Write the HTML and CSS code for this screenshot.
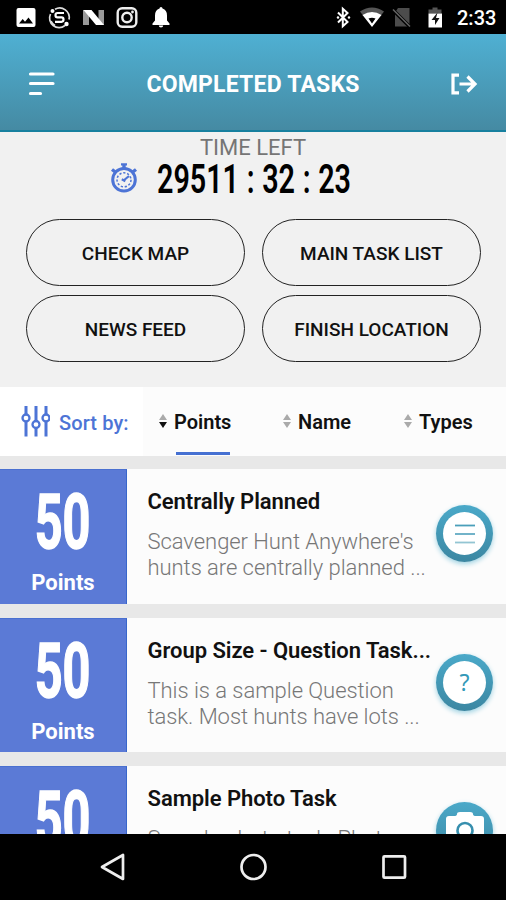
FILE: index.html
```html
<!DOCTYPE html>
<html lang="en">
<head>
<meta charset="utf-8">
<title>Completed Tasks</title>
<link rel="stylesheet" href="styles.css">
</head>
<body>
<div class="phone">
  <div class="status">
    <svg class="status-left" width="180" height="34" viewBox="0 0 180 34">
      <path fill="#fff" fill-rule="evenodd" d="M18.500 8h15q2 0 2 2v15q0 2-2 2h-15q-2 0-2-2v-15q0-2 2-2zM19 23.500h14l-4.500-6-3.500 4.300-2.300-2.800z"/>
      <g fill="none" stroke="#ddd" stroke-width="1.700">
        <path d="M55 9.300A9.500 9.500 0 0 1 69 19.500M65 25.500A9.500 9.500 0 0 1 50.500 14M51 21a9.500 9.500 0 0 0 4 4.500"/>
        <path stroke="#fff" stroke-width="2.200" d="M64 13h-6.500q-2 0-2 2.200t2 2.200h4q2 0 2 2.200t-2 2.200h-6.500"/>
      </g>
      <circle cx="52.500" cy="11" r="2" fill="#fff"/><circle cx="66.500" cy="24" r="2.200" fill="#fff"/>
      <path fill="#999" d="M83 10h6v15h-6zM98.500 10h5.500v15h-5.500z"/><path fill="#fff" d="M83.500 10h8l12.500 15h-8z"/>
      <g fill="none" stroke="#eee" stroke-width="2.400"><rect x="117.700" y="8.200" width="18.600" height="18.600" rx="4.500"/><circle cx="127" cy="17.500" r="4.700"/></g>
      <circle cx="132.500" cy="12" r="1.400" fill="#eee"/>
      <path fill="#fff" d="M159.500 8.500q0-1.500 1.500-1.500t1.500 1.500q4.500 1.300 4.500 7v5l2.500 3v1.500h-17v-1.500l2.500-3v-5q0-5.700 4.500-7zM158.800 25.500h4.400q0 2-2.200 2t-2.200-2z"/>
    </svg>
    <div class="status-right">
      <svg width="116" height="34" viewBox="0 0 116 34">
        <path fill="none" stroke="#fff" stroke-width="2" d="M6 12.500l9.500 9.500-4.700 4.300v-17.500l4.700 4.200-9.500 9.500"/>
        <circle cx="6" cy="17.500" r="1.200" fill="#fff"/><circle cx="17" cy="17.500" r="1.200" fill="#fff"/>
        <path fill="#555" d="M28 11.500q12-8 24 0l-3 4q-9-6-18 0z"/>
        <path fill="#fff" fill-rule="evenodd" d="M30.500 15q9.500-6 19 0l-9.500 12zM36.500 18.500l3.500 5 3.500-5q-3.500-1.500-7 0z"/>
        <path fill="#4c4c4c" d="M66 8h11.500v18.500h-14.500v-14z"/><path d="M60 9l18 18" stroke="#000" stroke-width="3.500"/><path d="M61 9.500l17 17" stroke="#666" stroke-width="1.500"/>
        <path fill="#555" d="M100.500 7.500h5v2h4v4h-13v-4h4z"/><path fill="#fff" d="M96.500 13.500h13.500v14h-13.500z"/><path fill="#111" d="M105.500 12.500l-6 7.500h3.500v5l4.500-7h-3.500z"/>
      </svg>
      <span class="clock">2:33</span>
    </div>
  </div>

  <header class="header">
    <svg width="28" height="26" viewBox="0 0 28 26"><path d="M2.500 3h22.500M2.500 12.500h22.500M2.500 22.500h10" fill="none" stroke="#fff" stroke-width="3.200" stroke-linecap="round"/></svg>
    <h1 class="title">COMPLETED TASKS</h1>
    <svg width="28" height="24" viewBox="0 0 28 24"><path d="M9 3.200h-6v17.600h6M9.500 12h16M17.500 4.500l7.500 7.500-7.500 7.500" fill="none" stroke="#fff" stroke-width="3.200"/></svg>
  </header>

  <section class="overview">
    <div class="time-label">TIME LEFT</div>
    <div class="timer">
      <svg width="30" height="34" viewBox="0 0 30 34">
        <g fill="none" stroke="#4d74d6"><circle cx="15" cy="19.800" r="11.300" stroke-width="3"/><circle cx="15" cy="19.800" r="7" stroke-width="1.500" stroke-dasharray="2.200 1.800"/><path stroke-width="3.400" d="M15 4v5M3 9.500l4 3M27 9.500l-4 3"/><path stroke-width="2.200" d="M12 4.300h6M14 21l6-5M12.800 19.300l3.500 2"/></g>
      </svg>
      <span class="digits">29511 : 32 : 23</span>
    </div>
    <nav class="actions">
      <a class="pill">CHECK MAP</a><a class="pill">MAIN TASK LIST</a>
      <a class="pill">NEWS FEED</a><a class="pill">FINISH LOCATION</a>
    </nav>
  </section>

  <div class="sort">
    <div class="sort-label">
      <svg width="30" height="32" viewBox="0 0 30 32"><g fill="none" stroke="#4d74d6" stroke-width="3"><path d="M6 0v8.500M6 15.500v15M16 0v15M16 22v8.500M26 0v8.500M26 15.500v15"/><circle cx="6" cy="12" r="3.500" stroke-width="2.300"/><circle cx="16" cy="18.500" r="3.500" stroke-width="2.300"/><circle cx="26" cy="12" r="3.500" stroke-width="2.300"/></g></svg>
      <span>Sort by:</span>
    </div>
    <div class="sort-option active"><svg width="10" height="16" viewBox="0 0 10 16"><path fill="#aaa" d="M1 7l4-6 4 6z"/><path fill="#111" d="M1 9h8l-4 6z"/></svg><span>Points</span></div>
    <div class="sort-option"><svg width="10" height="16" viewBox="0 0 10 16"><path fill="#aaa" d="M1 7l4-6 4 6zM1 9h8l-4 6z"/></svg><span>Name</span></div>
    <div class="sort-option"><svg width="10" height="16" viewBox="0 0 10 16"><path fill="#aaa" d="M1 7l4-6 4 6zM1 9h8l-4 6z"/></svg><span>Types</span></div>
  </div>

  <main class="tasks">
    <article class="task">
      <div class="score"><span class="amount">50</span><span class="unit">Points</span></div>
      <div class="info"><h2>Centrally Planned</h2><p>Scavenger Hunt Anywhere's<br>hunts are centrally planned ...</p></div>
      <div class="badge"><div class="disc"><svg width="24" height="24" viewBox="0 0 24 24"><path d="M2 3.500h20" stroke="#4a9fba" stroke-width="1.800"/><path d="M2 12h20" stroke="#62abc3" stroke-width="1.800"/><path d="M2 20.500h20" stroke="#93c5d3" stroke-width="1.800"/></svg></div></div>
    </article>
    <article class="task">
      <div class="score"><span class="amount">50</span><span class="unit">Points</span></div>
      <div class="info"><h2>Group Size - Question Task...</h2><p>This is a sample Question<br>task. Most hunts have lots ...</p></div>
      <div class="badge"><div class="disc">?</div></div>
    </article>
    <article class="task">
      <div class="score"><span class="amount">50</span><span class="unit">Points</span></div>
      <div class="info"><h2>Sample Photo Task</h2><p>Sample photo task. Photo</p></div>
      <div class="badge"><svg width="40" height="40" viewBox="0 0 40 40"><path fill="#fff" d="M4 5h5q3 0 3-2t3-2h10q3 0 3 2t3 2h5q3 0 3 3v25q0 3-3 3h-32q-3 0-3-3v-25q0-3 3-3z"/><circle cx="20" cy="19.500" r="7.500" fill="none" stroke="#378fae" stroke-width="2.600"/></svg></div>
    </article>
  </main>

  <footer class="nav">
    <svg width="28" height="30" viewBox="0 0 28 30"><path d="M24 3v24l-21-12z" fill="none" stroke="#eee" stroke-width="2.700" stroke-linejoin="round"/></svg>
    <svg width="28" height="30" viewBox="0 0 28 30"><circle cx="14.500" cy="15" r="12" fill="none" stroke="#eee" stroke-width="2.700"/></svg>
    <svg width="28" height="30" viewBox="0 0 28 30"><rect x="3.500" y="4.300" width="21.500" height="21.400" rx="1" fill="none" stroke="#eee" stroke-width="2.700"/></svg>
  </footer>
</div>
</body>
</html>
```
FILE: styles.css
```css
* { box-sizing: border-box; }
body { margin: 0; background: #000; font-family: Roboto, sans-serif; }
svg { display: block; flex: none; }
.phone { width: 506px; height: 900px; display: flex; flex-direction: column; overflow: hidden; background: #e8e8e8; }
.status { height: 34px; flex: none; display: flex; justify-content: space-between; background: #000; }
.status-right { display: flex; padding-right: 11px; align-items: center; }
.clock { color: #fff; font-size: 20px; line-height: 34px; font-weight: 500; width: 38px; margin-left: 9px; padding-top: 2px; white-space: nowrap; }
.header { height: 98px; flex: none; display: flex; align-items: center; justify-content: space-between; padding: 4px 28px 0; background: linear-gradient(#4fb0d3, #458aa3); border-bottom: 2px solid #17809f; }
.title { margin: 0; color: #fff; font-size: 23px; font-weight: 700; letter-spacing: 0.2px; line-height: 28px; padding-top: 2px; white-space: nowrap; }
.overview { height: 255px; flex: none; background: #f1f1f1; }
.time-label { height: 28px; padding-top: 3px; line-height: 26px; font-size: 22px; color: #757575; text-align: center; }
.timer { height: 34px; display: flex; padding-left: 109px; gap: 18px; }
.digits { font-size: 41px; line-height: 38px; font-weight: 600; color: #000; word-spacing: 0.8px; white-space: nowrap; transform: scaleX(0.7); transform-origin: left; }
.actions { display: grid; grid-template-columns: 219px 219px; grid-auto-rows: 67px; gap: 9px 17px; padding: 25px 26px 0; }
.pill { border: 1.500px solid #222; border-radius: 34px; display: flex; align-items: center; justify-content: center; padding-top: 2px; color: #111; font-size: 19px; font-weight: 500; white-space: nowrap; }
.sort { height: 69px; flex: none; display: grid; grid-template-columns: 143px 121px 121px 121px; background: #fcfcfc; font-size: 20px; font-weight: 600; color: #111; }
.sort-label { display: flex; align-items: center; gap: 9px; padding-left: 20px; background: #fff; color: #4d74d6; letter-spacing: 0.1px; white-space: nowrap; }
.sort-label span { padding-top: 2px; font-weight: 500; }
.sort-option { display: flex; align-items: center; gap: 6px; padding-left: 15px; }
.sort-option:not(.active) { padding-left: 18px; }
.sort-option span { line-height: 67px; padding-top: 2px; }
.sort-option svg { margin-top: -2px; }
.active { background: linear-gradient(#4570d2, #4570d2) 33px 65px / 54px 3px no-repeat; }
.tasks { flex: 1; min-height: 0; overflow: hidden; display: flex; flex-direction: column; gap: 14px; padding-top: 13px; }
.task { height: 134.600px; flex: none; display: flex; background: #fcfcfc; }
.score { width: 127px; flex: none; display: flex; flex-direction: column; align-items: center; padding-top: 22px; background: #5b7ad6; border-right: 1px solid #3866cb; border-top: 1px solid #4a70d0; color: #fff; }
.amount { font-size: 76px; line-height: 60px; font-weight: 700; -webkit-text-stroke: 1.5px #fff; transform: scaleX(0.64); }
.unit { margin-top: 18px; font-size: 22px; line-height: 26px; font-weight: 700; }
.info { width: 309px; flex: none; padding: 19px 0 0 20.500px; white-space: nowrap; }
.info h2 { margin: 0; font-size: 22px; line-height: 28px; font-weight: 600; letter-spacing: -0.05px; color: #111; }
.info p { margin: 13px 0 0; font-size: 22px; line-height: 26px; font-weight: 300; letter-spacing: -0.05px; color: #777; }
.badge { width: 57px; height: 57px; margin-top: 36px; border-radius: 50%; display: flex; align-items: center; justify-content: center; background: linear-gradient(#4aa9c9, #3c87a2); box-shadow: 0 2px 5px #9fd3e3; }
.disc { width: 43px; height: 43px; border-radius: 50%; background: #fff; display: flex; align-items: center; justify-content: center; color: #3499b8; font-family: "Noto Sans", sans-serif; font-size: 23px; }
.nav { height: 66.500px; flex: none; display: flex; justify-content: center; align-items: center; gap: 112.500px; background: #000; }
```
